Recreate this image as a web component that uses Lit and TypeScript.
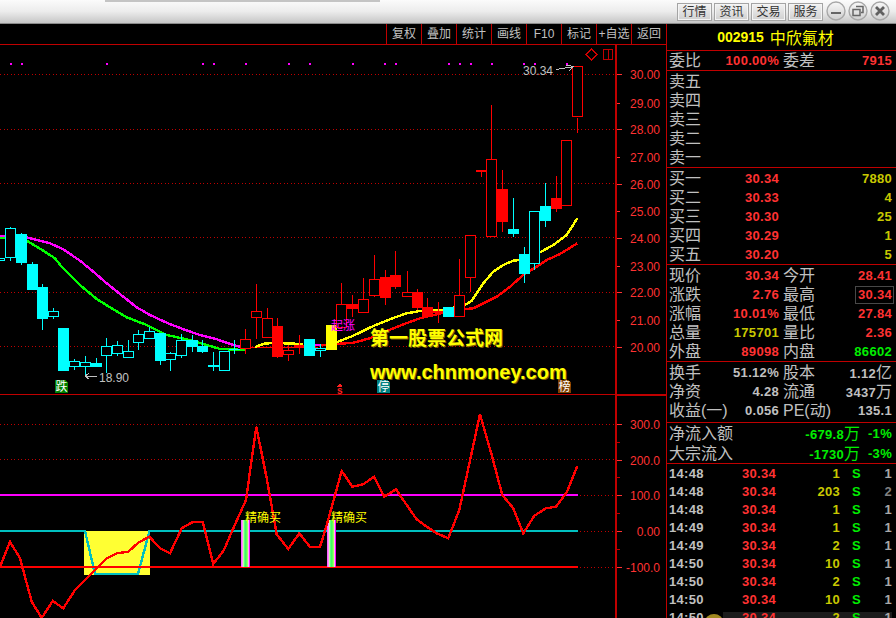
import { LitElement, html, css, svg } from "lit";
import { customElement } from "lit/decorators.js";

type C = [number, number, number, number, number, string];
const z4 = (v: number) => 220 + v / 3;
const z5 = (v: number) => 90 + v / 3;
const z6 = (v: number) => 395 + v / 3;

// cx, wickTop, wickBot, bodyTop, bodyBot, kind (zoomed y values)
const leftCandles: C[] = [
  [10, 21, 122, 25, 113, "o"], [21, 38, 135, 42, 129, "c"], [32, 126, 209, 132, 209, "c"],
  [42, 192, 330, 201, 296, "c"], [53, 264, 297, 274, 290, "o"], [63, 324, 452, 324, 452, "c"],
  [74, 418, 450, 424, 442, "o"], [85, 408, 470, 427, 442, "o"], [96, 415, 441, 430, 441, "c"],
  [106, 354, 458, 379, 407, "o"], [117, 363, 407, 376, 401, "o"], [128, 361, 413, 394, 413, "o"],
  [138, 330, 390, 343, 368, "o"], [149, 320, 356, 334, 356, "o"], [160, 340, 435, 340, 422, "c"],
  [170, 395, 452, 400, 419, "o"], [181, 343, 413, 361, 407, "o"], [192, 345, 395, 361, 380, "c"],
  [202, 360, 400, 378, 396, "c"], [213, 396, 452, 436, 442, "o"], [224, 394, 452, 394, 452, "o"],
  [234, 360, 402, 386, 390, "c"], [245, 327, 402, 358, 388, "R"], [256, 192, 358, 274, 293, "R"],
  [267, 264, 353, 295, 353, "R"], [277, 294, 413, 319, 410, "r"], [288, 375, 423, 391, 404, "R"],
  [299, 345, 402, 376, 380, "r"], [309, 357, 407, 357, 407, "c"], [320, 372, 410, 384, 392, "o"],
];
const rightCandles: C[] = [
  [331, 705, 780, 705, 780, "y"], [341, 580, 713, 643, 713, "R"], [352, 615, 680, 643, 658, "r"],
  [363, 565, 670, 628, 670, "R"], [374, 495, 622, 568, 617, "R"], [385, 540, 645, 562, 623, "r"],
  [395, 483, 597, 555, 591, "r"], [407, 544, 620, 607, 620, "R"], [417, 598, 660, 607, 654, "r"],
  [427, 624, 685, 652, 678, "r"], [438, 635, 700, 662, 668, "r"], [448, 651, 681, 651, 681, "c"],
  [459, 507, 680, 616, 680, "R"], [470, 436, 607, 436, 565, "R"], [481, 240, 262, 240, 245, "r"],
  [491, 45, 442, 208, 442, "R"], [502, 240, 425, 297, 396, "r"], [513, 324, 440, 417, 432, "c"],
  [524, 470, 578, 492, 552, "c"], [534, 364, 540, 364, 523, "o"], [545, 280, 410, 348, 393, "c"],
  [556, 258, 365, 324, 357, "r"], [566, 151, 347, 151, 347, "R"],
];

const pts = (a: number[][], fx: (x: number) => number, fy: (y: number) => number) =>
  a.map(([x, y]) => `${fx(x).toFixed(1)},${fy(y).toFixed(1)}`).join(" ");
const xa = (v: number) => v / 3;
const xb = (v: number) => 320 + v / 3;

const magenta = pts([[0,47],[80,52],[110,60],[150,70],[190,88],[240,122],[280,155],[320,190],[370,230],[410,262],[450,285],[500,308],[550,328],[600,345],[650,358],[700,375],[720,380]], xa, z4);
const green = pts([[0,53],[80,62],[130,92],[165,115],[185,140],[240,195],[290,237],[330,262],[380,292],[440,315],[500,345],[560,358],[620,375],[660,387],[735,390]], xa, z4);
const yellowMa = pts([[50,757],[100,737],[160,708],[220,684],[260,670],[300,663],[370,660],[435,645],[455,632],[490,580],[520,545],[550,525],[580,512],[600,510],[660,487],[700,465],[740,435],[772,385]], xb, z5);
const redMa = pts([[50,762],[100,758],[150,745],[200,723],[250,703],[300,685],[370,668],[440,657],[460,655],[490,640],[530,620],[570,590],[610,555],[650,530],[680,510],[720,492],[772,460]], xb, z5);

const curve = [
  ...[[0,515],[30,440],[60,490],[95,620],[125,669],[158,618],[190,640],[225,585],[285,525],[320,490],[350,475],[385,470],[415,443],[448,425],[480,460],[510,475],[545,400],[580,380],[608,380],[640,507],[672,465],[700,400],[738,315],[769,95],[800,250],[830,418],[865,462],[898,415],[930,456],[960,456]].map(([x, y]) => [x / 3, y]),
  ...[[20,390],[65,228],[97,275],[130,268],[162,245],[193,305],[228,283],[260,330],[290,373],[320,395],[350,415],[385,430],[418,345],[480,58],[515,180],[547,300],[580,340],[610,415],[643,362],[678,340],[708,335],[740,292],[772,213]].map(([x, y]) => [320 + x / 3, y]),
];
const curvePts = curve.map(([x, y]) => `${x.toFixed(1)},${z6(y).toFixed(1)}`).join(" ");

const dots = [10,21,106,202,213,245,288,309,352,384,395,448,459,470,491,523,534,566];
const priceLabels: [string, number][] = [["30.00",74],["29.00",103],["28.00",129],["27.00",157],["26.00",184],["25.00",211],["24.00",238],["23.00",266],["22.00",292],["21.00",320],["20.00",347]];
const subLabels: [string, number][] = [["300.0",424],["200.0",460],["100.0",495],["0.00",531],["-100.0",567]];
const stripes = ["#ff60ff","#ff90ff","#c0ffa0","#60ff80","#40ff60","#60ff60","#a0ff60","#ffb0ff","#ff00ff"];

const candle = ([cx, wt, wb, bt, bb, k]: C, fy: (v: number) => number) => {
  const col = k === "c" || k === "o" ? "#00ffff" : k === "y" ? "#ffff00" : "#ff0000";
  const t = Math.round(fy(bt));
  const b = Math.round(fy(bb));
  const wick = svg`<rect x=${cx} y=${Math.round(fy(wt))} width="1" height=${Math.max(1, Math.round(fy(wb)) - Math.round(fy(wt)))} fill=${col}></rect>`;
  const body = k === "o" || k === "R"
    ? svg`<rect x=${cx - 4.5} y=${t + 0.5} width="10" height=${Math.max(1, b - t - 1)} fill="#000" stroke=${col}></rect>`
    : svg`<rect x=${cx - 5} y=${t} width="11" height=${Math.max(1, b - t)} fill=${col}></rect>`;
  return svg`${wick}${body}`;
};

const marker = (x: number, y: number, t: string, c: string) => svg`
  <path d="M${x} ${y}h10l3 3v10h-13z" fill=${c}></path>
  <text class="mk" x=${x + 0.5} y=${y + 11}>${t}</text>`;

const q2 = (l1: string, v1: unknown, c1: string, l2: string, v2: unknown, c2: string) => html`
  <div class="row four">
    <span class="lb">${l1}</span><span class="val ${c1}">${v1}</span>
    <span class="lb second">${l2}</span><span class="val ${c2}">${v2}</span>
  </div>`;
const q1 = (l: string, p: string, v: string) => html`
  <div class="row four">
    <span class="lb">${l}</span><span class="val red">${p}</span><span></span><span class="val ylw">${v}</span>
  </div>`;
const cjk = (n: string, u: string) => html`${n}<span class="unit">${u}</span>`;

const ticks: [string, string, string, string][] = [
  ["14:48","1","1",""],["14:48","203","2","dim"],["14:48","1","1",""],["14:49","1","1",""],
  ["14:49","2","1",""],["14:50","10","1",""],["14:50","2","1",""],["14:50","10","1",""],["14:50","2","1",""],
];

@customElement("app-root")
export class AppRoot extends LitElement {
  static styles = css`
    :host { display: block; width: 896px; height: 618px; overflow: hidden; background: #000;
      font-family: "Liberation Sans", "Noto Sans CJK SC", sans-serif; }
    .top { position: relative; height: 23px; border-bottom: 1px solid #8a8a8a; box-sizing: content-box;
      background: linear-gradient(#fbfbfb, #ececec 50%, #c6c6c6);
      display: flex; justify-content: flex-end; align-items: center; gap: 2px; padding-right: 6px; }
    .strip { position: absolute; left: 105px; top: 0; width: 275px; height: 2px; background: #c4c4c4; filter: blur(0.6px); }
    .tb { width: 35px; height: 18px; box-sizing: border-box; border: 1px solid #a4a4a4; box-shadow: inset 0 0 0 1px #f4f4f4;
      background: linear-gradient(#f2f2f2, #d0d0d0); color: #333; font-size: 12px; line-height: 16px; text-align: center; letter-spacing: 0; margin-top: 1px; }
    .win { display: block; }
    .wins { display: flex; gap: 2px; margin-left: 1px; margin-top: -2px; }
    .main { display: flex; height: 594px; }
    .left { width: 666px; flex: none; display: flex; flex-direction: column; }
    .tools { height: 20px; border-bottom: 1px solid #c00000; display: flex; justify-content: flex-end; flex: none; }
    .tool { width: 35px; box-sizing: border-box; border-left: 1px solid #c00000; color: #c0c0c0; font-size: 12px; line-height: 21px; text-align: center; white-space: nowrap; }
    svg.chart { display: block; width: 666px; height: 573px; shape-rendering: crispEdges; }
    .ax { font: 12px "Liberation Sans", sans-serif; fill: #ff3232; text-anchor: end; }
    .gt { font: 12px "Liberation Sans", sans-serif; fill: #c0c0c0; }
    .mk { font: 12px "Noto Sans CJK SC", sans-serif; fill: #fff; }
    .wm1 { font: 700 19px "Noto Sans CJK SC", sans-serif; fill: #ffff00; }
    .wm2 { font: 700 20px "Liberation Sans", sans-serif; fill: #ffff00; }
    .wms { fill: #806000; }
    .buy { font: 12px "Noto Sans CJK SC", sans-serif; fill: #ffff00; }
    .start { font: 12px "Noto Sans CJK SC", sans-serif; fill: #ff00ff; }
    .ln { fill: none; stroke-width: 2.4; }
    .dot { stroke: #c00000; stroke-width: 1; stroke-dasharray: 1 2.5; }
    .panel { flex: 1; min-width: 0; border-left: 1px solid #c00000; display: flex; flex-direction: column; }
    .sec { border-bottom: 1px solid #c00000; padding-left: 2px; padding-right: 4px; flex: none; }
    .code { height: 26px; display: flex; justify-content: center; align-items: center; gap: 6px; color: #ffff00; padding-right: 14px; }
    .code b { font-size: 14px; letter-spacing: 0; }
    .code span { font-size: 16px; }
    .s1 { height: 19px; }
    .s5 { height: 95px; padding-top: 1px; }
    .s3 { height: 59px; padding-top: 1px; }
    .s2 { height: 40px; padding-top: 0; }
    .row { height: 19px; line-height: 19px; font-size: 16px; color: #c0c0c0; white-space: nowrap; }
    .flow .row { height: 20px; line-height: 21px; }
    .four { display: grid; grid-template-columns: 32px 78px 37px 1fr; }
    .second { padding-left: 4px; }
    .val { text-align: right; font-weight: 700; font-size: 13px; letter-spacing: 0.3px; }
    .gry { color: #c0c0c0; }
    .red { color: #ff3232; }
    .ylw { color: #c8c800; }
    .grn { color: #00ee00; }
    .unit { font-size: 16px; font-weight: 400; letter-spacing: 0; }
    .hi { display: inline-block; outline: 1px solid #484848; outline-offset: 1px; line-height: 14px; padding-left: 1px; }
    .flowrow { display: grid; grid-template-columns: 64px 127px 1fr; }
    .ticks { padding: 1px 4px 0 2px; flex: 1; overflow: hidden; }
    .tick { position: relative; height: 18px; line-height: 18px; display: grid; grid-template-columns: 40px 67px 64px 14px 1fr; font-size: 13px; font-weight: 700; letter-spacing: 0.3px; }
    .tick span { position: relative; z-index: 1; }
    .tick .n { text-align: right; }
    .tick .s { padding-left: 12px; white-space: nowrap; }
    .dim { color: #808080; }
    .gr2 { color: #a8a8a8; }
    .last { background: linear-gradient(#1c1c1c, #1c1c1c) no-repeat 54px 3px; }
    .coin { position: absolute; left: 36px; top: 5px; width: 18px; height: 16px; border-radius: 50%; background: #a08820; }
  `;

  private winButton(icon: unknown) {
    return html`<svg class="win" width="20" height="20" viewBox="0 0 20 20">
      <defs><linearGradient id="wg" x1="0" y1="0" x2="0" y2="1"><stop offset="0" stop-color="#f8f8f8"/><stop offset="1" stop-color="#cfcfcf"/></linearGradient></defs>
      <circle cx="10" cy="10" r="9" fill="url(#wg)" stroke="#a8a8a8" stroke-width="1.4"></circle>
      ${icon}
    </svg>`;
  }

  render() {
    return html`
      <div class="top">
        <div class="strip"></div>
        <div class="tb">行情</div><div class="tb">资讯</div><div class="tb">交易</div><div class="tb">服务</div>
        <div class="wins">
          ${this.winButton(svg`<rect x="5" y="11" width="10" height="2" fill="#666"></rect>`)}
          ${this.winButton(svg`<path d="M8 5.5h7v6h-2M5 8.5h7v6H5z M5 8.5h7" fill="none" stroke="#666" stroke-width="1.5"></path>`)}
          ${this.winButton(svg`<path d="M6 6l8 8M14 6l-8 8" fill="none" stroke="#606060" stroke-width="2.8"></path>`)}
        </div>
      </div>
      <div class="main">
        <div class="left">
          <div class="tools">
            ${["复权","叠加","统计","画线","F10","标记","+自选","返回"].map((t) => html`<div class="tool">${t}</div>`)}
          </div>
          <svg class="chart" viewBox="0 45 666 573">
            ${[74, 129, 183, 237, 292, 346].map((y) => svg`<line class="dot" x1="0" x2="615" y1=${y + 0.5} y2=${y + 0.5}></line>`)}
            ${[424, 459].map((y) => svg`<line class="dot" x1="0" x2="615" y1=${y + 0.5} y2=${y + 0.5}></line>`)}
            ${[495, 531, 567].map((y) => svg`<line class="dot" x1="580" x2="615" y1=${y + 0.5} y2=${y + 0.5}></line>`)}
            <rect x="615" y="45" width="2" height="573" fill="#c00000"></rect>
            <rect x="0" y="394" width="666" height="1" fill="#c00000"></rect>
            <rect x="615" y="395" width="51" height="1" fill="#c00000"></rect>
            ${priceLabels.map(([t, y], i) => svg`
              <rect x="617" y=${y} width=${i % 2 ? 3 : 5} height="1" fill="#ff3232"></rect>
              <text class="ax" x="660" y=${y + 5}>${t}</text>`)}
            ${subLabels.map(([t, y]) => svg`
              <rect x="617" y=${y} width="5" height="1" fill="#ff3232"></rect>
              <text class="ax" x="660" y=${y + 5}>${t}</text>`)}
            ${[442, 477, 513, 549].map((y) => svg`<rect x="617" y=${y} width="3" height="1" fill="#c00000"></rect>`)}
            ${dots.map((x) => svg`<rect x=${x} y="63" width="2" height="2" fill="#ff00ff"></rect>`)}
            <polyline class="ln" points=${magenta} stroke="#ff00ff"></polyline>
            <polyline class="ln" points=${green} stroke="#00ff00"></polyline>
            <line x1="248" x2="318" y1="347" y2="347" stroke="#ff0000" stroke-width="1"></line>
            <polyline class="ln" points="255,347 265,343.5 275,343 303,344" stroke="#ffff00"></polyline>
            <rect x="315" y="344" width="6" height="2" fill="#ff00ff"></rect>
            <rect x="321" y="344" width="6" height="2" fill="#ff0000"></rect>
            <polyline class="ln" points=${yellowMa} stroke="#ffff00"></polyline>
            <polyline class="ln" points=${redMa} stroke="#ff0000"></polyline>
            <rect x="-1" y="258" width="5" height="2" fill="none" stroke="#00ffff"></rect>
            ${leftCandles.map((c) => candle(c, z4))}
            ${rightCandles.map((c) => candle(c, z5))}
            <rect x="577" y="118" width="1" height="15" fill="#ff0000"></rect>
            <rect x="572.5" y="66.5" width="10" height="50" fill="#000" stroke="#ff0000"></rect>
            <text class="start" x="331" y="330">起涨</text>
            <text class="gt" x="523" y="75">30.34</text>
            <path d="M556 69.5 L571 67 M566 65 L573 66.5 L569 71" fill="none" stroke="#c0c0c0"></path>
            <path d="M591.5 49 L597 54.5 L591.5 60 L586 54.5 Z" fill="none" stroke="#d00000"></path>
            <rect x="603.5" y="49.5" width="9" height="10" fill="none" stroke="#c00000"></rect>
            <rect x="608" y="50" width="1" height="9" fill="#c00000"></rect>
            ${marker(55, 380, "跌", "#008000")}
            ${marker(377, 380, "停", "#008080")}
            ${marker(558, 380, "榜", "#804000")}
            <text class="wm1 wms" x="371" y="346">第一股票公式网</text>
            <text class="wm2 wms" x="371" y="380">www.chnmoney.com</text>
            <text class="wm1" x="370" y="345">第一股票公式网</text>
            <text class="wm2" x="370" y="379">www.chnmoney.com</text>
            <path d="M340 383.5l2.5 3h-5z" fill="#ff2020"></path>
            <text x="337" y="394" style="font:700 10px 'Liberation Sans';fill:#ff2020">s</text>
            <path d="M97 376H86 M89 373.5L85 376L89 379" fill="none" stroke="#c0c0c0"></path>
            <text class="gt" x="99" y="382">18.90</text>
            <rect x="84" y="531" width="66" height="44" fill="#ffff33"></rect>
            <polyline class="ln" points="0,531 85,531 95,574 138,574 149.5,531 578,531" stroke="#00c0c0"></polyline>
            <rect x="0" y="494" width="578" height="2" fill="#ff00ff"></rect>
            <rect x="0" y="566" width="578" height="2" fill="#ff0000"></rect>
            ${[241, 327].map((x) => stripes.map((c, i) => svg`<rect x=${x + i} y="520" width="1" height="47" fill=${c}></rect>`))}
            <polyline class="ln" points=${curvePts} stroke="#ff0000"></polyline>
            <text class="buy" x="245" y="522">精确买</text>
            <text class="buy" x="331" y="522">精确买</text>
          </svg>
        </div>
        <div class="panel">
          <div class="sec code"><b>002915</b><span>中欣氟材</span></div>
          <div class="sec s1">${q2("委比", "100.00%", "red", "委差", "7915", "red")}</div>
          <div class="sec s5">
            ${["卖五","卖四","卖三","卖二","卖一"].map((l) => html`<div class="row">${l}</div>`)}
          </div>
          <div class="sec s5">
            ${q1("买一","30.34","7880")}${q1("买二","30.33","4")}${q1("买三","30.30","25")}${q1("买四","30.29","1")}${q1("买五","30.20","5")}
          </div>
          <div class="sec s5">
            ${q2("现价","30.34","red","今开","28.41","red")}
            ${q2("涨跌","2.76","red","最高",html`<span class="hi">30.34</span>`,"red")}
            ${q2("涨幅","10.01%","red","最低","27.84","red")}
            ${q2("总量","175701","ylw","量比","2.36","red")}
            ${q2("外盘","89098","red","内盘","86602","grn")}
          </div>
          <div class="sec s3">
            ${q2("换手","51.12%","gry","股本",cjk("1.12","亿"),"gry")}
            ${q2("净资","4.28","gry","流通",cjk("3437","万"),"gry")}
            ${q2("收益(一)","0.056","gry","PE(动)","135.1","gry")}
          </div>
          <div class="sec s2 flow">
            <div class="row flowrow"><span>净流入额</span><span class="val grn">${cjk("-679.8","万")}</span><span class="val grn">-1%</span></div>
            <div class="row flowrow"><span>大宗流入</span><span class="val grn">${cjk("-1730","万")}</span><span class="val grn">-3%</span></div>
          </div>
          <div class="ticks">
            ${ticks.map(([t, v, n, d], i) => html`
              <div class="tick ${i === 8 ? "last" : ""}">
                ${i === 8 ? html`<i class="coin"></i>` : ""}
                <span class="gry">${t}</span><span class="n red">30.34</span><span class="n ylw">${v}</span><span class="s grn">S</span><span class="n ${d || "gr2"}">${n}</span>
              </div>`)}
          </div>
        </div>
      </div>`;
  }
}
